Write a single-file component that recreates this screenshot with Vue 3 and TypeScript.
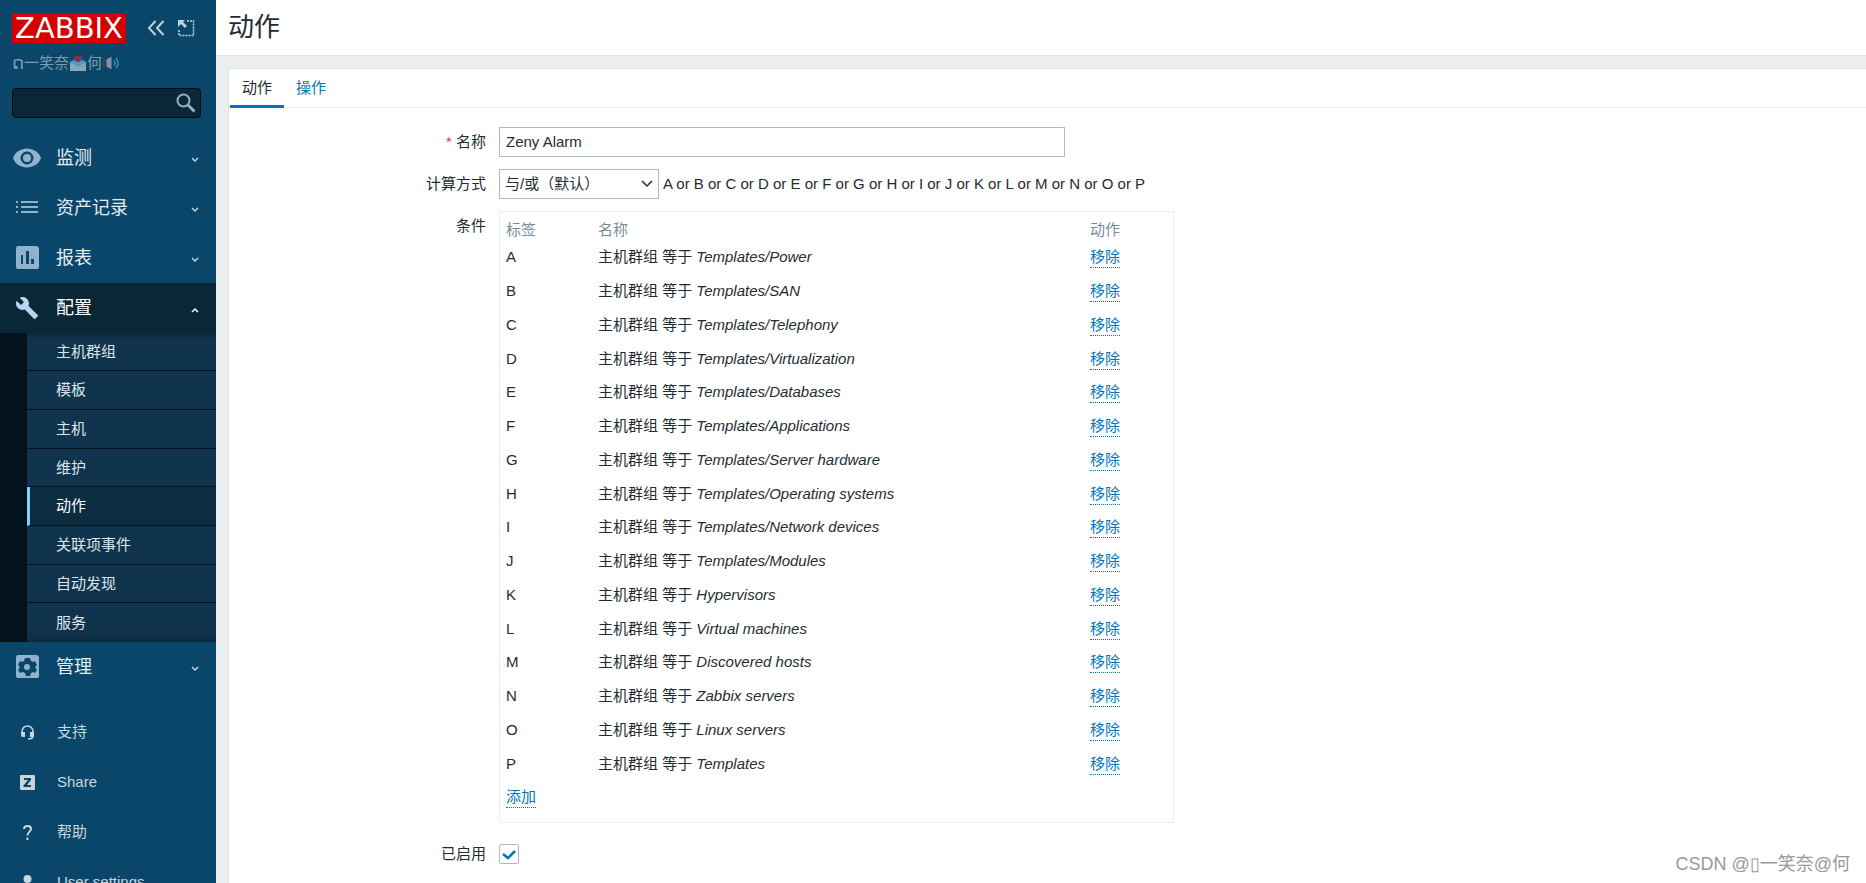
<script setup lang="ts">
import { ref } from 'vue'

interface Condition { label: string; name: string }

const topMenu = [
  { id: 'monitoring', title: '监测' },
  { id: 'inventory', title: '资产记录' },
  { id: 'reports', title: '报表' },
]
const subMenu = ['主机群组', '模板', '主机', '维护', '动作', '关联项事件', '自动发现', '服务']
const activeSub = '动作'
const supportMenu = [
  { id: 'support', title: '支持' },
  { id: 'share', title: 'Share' },
  { id: 'help', title: '帮助' },
  { id: 'user', title: 'User settings' },
]

const groups = [
  'Templates/Power', 'Templates/SAN', 'Templates/Telephony', 'Templates/Virtualization',
  'Templates/Databases', 'Templates/Applications', 'Templates/Server hardware',
  'Templates/Operating systems', 'Templates/Network devices', 'Templates/Modules',
  'Hypervisors', 'Virtual machines', 'Discovered hosts', 'Zabbix servers', 'Linux servers', 'Templates',
]
const conditions: Condition[] = groups.map((name, i) => ({ label: String.fromCharCode(65 + i), name }))
const formula = conditions.map((c) => c.label).join(' or ')

const actionName = ref('Zeny Alarm')
const enabled = ref(true)
const search = ref('')
</script>

<template>
  <div class="layout">
    <aside class="sidebar">
      <div class="brand">
        <a class="logo" href="#" aria-label="ZABBIX">ZABBIX</a>
        <button class="icon-btn" type="button" aria-label="collapse">
          <svg width="18" height="18" viewBox="0 0 18 18" fill="none" stroke="currentColor" stroke-width="2"><path d="M8.500 2 2 9l6.500 7M16.500 2 10 9l6.500 7" /></svg>
        </button>
        <button class="icon-btn" type="button" aria-label="hide">
          <svg width="18" height="18" viewBox="0 0 18 18" fill="currentColor"><path d="M1 1h7L6 3l4 4-2 2-4-4-3 3z" /><path d="M10 2h6.500v14.500H2V10" fill="none" stroke="currentColor" stroke-width="1.500" stroke-dasharray="2 1" /></svg>
        </button>
      </div>
      <div class="server">
        <span class="sym">ດ</span>
        <span>一笑奈</span>
        <svg width="18" height="18" viewBox="0 0 18 18"><path d="M1 7.500 9 3l8 4.500V17H1z" fill="#2f82b0" /><path d="M3 7h12v4l-6 3-6-3z" fill="#4c9bc5" /><path d="M9 8.500C6 6.500 5 5.300 5 3.700 5 1.300 8 .8 9 2.800c1-2 4-1.500 4 .9 0 1.600-1 2.800-4 4.800z" fill="#8c2b49" /><path d="m1 8 8 5 8-5v9H1z" fill="#8da5b6" /></svg>
        <span>何</span>
        <svg width="18" height="18" viewBox="0 0 18 18"><path d="M1 5h4v8H1z" fill="#2c4a5c" /><path d="M4 5 10 2v14l-6-3z" fill="#7c96a5" stroke="#183c52" /><path d="M12 6.500q2 2.500 0 5M14 4q4 5 0 10" fill="none" stroke="#1b9ac4" stroke-width="1.500" /></svg>
      </div>
      <form class="search" @submit.prevent>
        <input v-model="search" type="text" aria-label="search" />
        <button type="submit" aria-label="search">
          <svg width="20" height="20" viewBox="0 0 20 20" fill="none" stroke="currentColor" stroke-width="2"><circle cx="7.500" cy="7.500" r="6" /><path d="m12 12 6.500 6.500" stroke-width="3" /></svg>
        </button>
      </form>

      <nav class="menu">
        <a v-for="m in topMenu" :key="m.id" href="#" class="item">
          <svg v-if="m.id === 'monitoring'" class="ico" viewBox="0 0 30 30"><path fill-rule="evenodd" d="M1 15C3 9 9 5.500 15 5.500S27 9 29 15C27 21 21 24.500 15 24.500S3 21 1 15zM15 8.500a6.500 6.500 0 1 0 0 13 6.500 6.500 0 0 0 0-13z" /><circle cx="15" cy="15" r="4" /></svg>
          <svg v-else-if="m.id === 'inventory'" class="ico" viewBox="0 0 30 30"><path d="M4 8h2v2H4zM9 8h17v2H9zM4 13h2v2H4zM9 13h17v2H9zM4 18h2v2H4zM9 18h17v2H9z" /></svg>
          <svg v-else class="ico" viewBox="0 0 30 30"><path fill-rule="evenodd" d="M6 3h18q3 0 3 3v18q0 2-3 2H6q-2 0-2-2V6q0-3 2-3zM9 12v9h2v-9zM14 8v13h3V8zM19 16v5h3v-5z" /></svg>
          <span>{{ m.title }}</span>
          <svg class="chev" viewBox="0 0 8 6"><path d="m1 1 3 3 3-3" /></svg>
        </a>
        <div class="group">
          <a href="#" class="item open">
            <svg class="ico" viewBox="0 0 30 30"><path transform="translate(3 3)" d="M22.700 19l-9.100-9.100c.9-2.300.4-5-1.500-6.900-2-2-5-2.400-7.400-1.300L9 6 6 9 1.600 4.700C.4 7.100.9 10.100 2.900 12.100c1.900 1.900 4.600 2.400 6.900 1.500l9.100 9.100c.4.400 1 .4 1.400 0l2.300-2.300c.5-.4.5-1.100.1-1.400z" /></svg>
            <span>配置</span>
            <svg class="chev" viewBox="0 0 8 6"><path d="m1 5 3-3 3 3" /></svg>
          </a>
          <div class="submenu">
            <a v-for="s in subMenu" :key="s" href="#" :class="{ active: s === activeSub }">{{ s }}</a>
          </div>
        </div>
        <a href="#" class="item">
          <svg class="ico" viewBox="0 0 30 30"><path fill-rule="evenodd" d="M6 3h18q3 0 3 3v18q0 2-3 2H6q-2 0-2-2V6q0-3 2-3zM13 6l-1 3-2 1-2-1-2 4 2 2-2 3 2 3 3-1 2 1 1 3h4l1-3 2-1 2 1 2-3-2-3 2-2-2-4-2 1-2-1-1-3z" /><circle cx="15" cy="15" r="3" /></svg>
          <span>管理</span>
          <svg class="chev" viewBox="0 0 8 6"><path d="m1 1 3 3 3-3" /></svg>
        </a>
      </nav>
      <nav class="support">
        <a v-for="m in supportMenu" :key="m.id" href="#" class="item">
          <svg v-if="m.id === 'support'" class="small" viewBox="0 0 15 15"><path d="M2 8V6.500a5.500 5.500 0 0 1 11 0V11q0 3-5 3" fill="none" stroke="currentColor" stroke-width="1.500" /><path d="M1 7h4v5H3q-2 0-2-2zM10 7h4v3q0 2-2 2h-2z" /></svg>
          <svg v-else-if="m.id === 'share'" class="small" viewBox="0 0 15 15"><path fill-rule="evenodd" d="M1 0h13q1 0 1 1v13q0 1-1 1H1q-1 0-1-1V1q0-1 1-1zM4 3v2h4l-4.500 5.500V12H11v-2H7l4-5V3z" /></svg>
          <svg v-else-if="m.id === 'help'" class="small" viewBox="0 0 15 15"><path d="M4 4Q4 1 7.500 1t3.500 3c0 2.500-3.500 3-3.500 6.500" fill="none" stroke="currentColor" stroke-width="2" /><path d="M6.500 12.500h2v2.500h-2z" /></svg>
          <svg v-else class="small" viewBox="0 0 15 15"><circle cx="7.500" cy="4" r="4" /><path d="M0 15q0-5 7.500-5T15 15z" /></svg>
          <span>{{ m.title }}</span>
        </a>
      </nav>
    </aside>

    <div class="page">
      <header><h1>动作</h1></header>
      <main class="panel">
        <nav class="tabs">
          <a href="#" class="selected">动作</a>
          <a href="#">操作</a>
        </nav>
        <form class="form" @submit.prevent>
          <label for="name"><span class="req">*</span> 名称</label>
          <input id="name" v-model="actionName" class="name" type="text" />

          <label for="calc">计算方式</label>
          <div class="calc">
            <div class="select">
              <select id="calc"><option>与/或（默认）</option></select>
              <svg width="12" height="8" viewBox="0 0 12 8"><path d="m1 1 5 5 5-5" /></svg>
            </div>
            <span>{{ formula }}</span>
          </div>

          <span class="label">条件</span>
          <div class="box">
            <table>
              <thead><tr><th class="c1">标签</th><th class="c2">名称</th><th>动作</th></tr></thead>
              <tbody>
                <tr v-for="c in conditions" :key="c.label">
                  <td>{{ c.label }}</td>
                  <td>主机群组 等于 <em>{{ c.name }}</em></td>
                  <td><button type="button" class="link">移除</button></td>
                </tr>
                <tr><td colspan="3"><button type="button" class="link">添加</button></td></tr>
              </tbody>
            </table>
          </div>

          <label for="enabled">已启用</label>
          <span class="check">
            <input id="enabled" v-model="enabled" type="checkbox" />
            <svg v-if="enabled" width="20" height="20" viewBox="0 0 20 20"><path d="m4 10 5 4 7-7" /></svg>
          </span>
        </form>
      </main>
      <div class="watermark">CSDN @▯一笑奈@何</div>
    </div>
  </div>
</template>

<style>
body { background: #ebeef0; overflow: hidden; }
</style>

<style scoped>
.layout {
  display: flex;
  height: 100vh;
  overflow: hidden;
  font: 15px/20px "Liberation Sans", Arial, "Noto Sans CJK SC", sans-serif;
  color: #1f2c33;
}
.layout *, .layout { box-sizing: border-box; }
a { text-decoration: none; color: inherit; }
button, input, select { font: inherit; color: inherit; }
button { padding: 0; border: 0; background: none; cursor: pointer; }

.sidebar {
  flex: 0 0 216px;
  background: #0a466a;
  color: #dce6ec;
  overflow: hidden;
}
.brand { display: flex; align-items: center; padding: 13px 8px 0 12px; }
.logo {
  width: 114px;
  height: 30px;
  margin-right: 21px;
  background: #d40000;
  color: #fff;
  font: 29px/30px "DejaVu Sans", "Noto Sans", sans-serif;
  text-align: center;
}
.icon-btn { height: 30px; width: 30px; color: #c2d1da; text-align: left; }
.icon-btn svg { display: block; }
.server {
  display: flex;
  align-items: center;
  height: 20px;
  margin: 10px 12px 15px;
  color: #7c9cb0;
}
.sym { font-family: "DejaVu Sans", sans-serif; font-size: 18px; }
.search {
  display: flex;
  height: 30px;
  margin: 0 15px 15px 12px;
  background: #0a2737;
  border: 1px solid #020d14;
  border-radius: 4px;
}
.search input { flex: 1; min-width: 0; background: none; border: 0; outline: 0; padding: 0 5px; }
.search button { width: 28px; color: #8fb0c6; }
.search svg { display: block; margin: auto; }

.item { display: flex; align-items: center; height: 50px; padding: 0 17px 0 12px; }
.menu .item { font-size: 18px; color: #e4edf2; }
.menu .item span { flex: 1; }
.ico { width: 30px; height: 30px; margin-right: 14px; fill: #8fb3cc; }
.chev { width: 8px; height: 6px; margin-top: 3px; fill: none; stroke: #c2d1da; stroke-width: 1.500; }
.menu .open { background: #0a2737; color: #fff; }
.open .ico { fill: #b5d7ee; }
.open .chev { stroke: #fff; }
.submenu { padding-left: 27px; background: #03131c; }
.submenu a {
  display: flex;
  align-items: center;
  height: 39px;
  padding-left: 29px;
  background: #10344d;
  border-bottom: 1px solid #03131c;
}
.submenu a:nth-child(3n + 1) { height: 38px; }
.submenu a:first-child { background: linear-gradient(#0c2a3e, #10344d 9px); }
.submenu a:last-child { background: linear-gradient(#10344d 28px, #0c2a3e); border: 0; }
.submenu .active { background: #0c2d40; border-left: 3px solid #80cfff; padding-left: 26px; color: #fff; }
.support { padding-top: 15px; }
.support .item { color: #c8d6de; }
.small { width: 15px; height: 15px; margin: 0 22px 0 8px; fill: currentColor; }

.page { flex: 1; display: flex; flex-direction: column; min-width: 0; }
header { background: #fff; border-bottom: 1px solid #dfe4e7; padding: 12px; }
h1 { margin: 0; font-size: 26px; line-height: 31px; font-weight: 400; }
.panel {
  flex: 1;
  margin: 12px 0 0 12px;
  background: #fff;
  border: 1px solid #dfe4e7;
  border-width: 1px 0 0 1px;
}
.tabs { display: flex; margin-left: 1px; border-bottom: 1px solid #ebeef0; }
.tabs a { margin-bottom: -1px; padding: 9px 12px 7px; border-bottom: 3px solid transparent; color: #0275b8; }
.tabs .selected { color: #1f2c33; border-color: #0275b8; }

.form {
  display: grid;
  grid-template-columns: 257px 1fr;
  justify-items: start;
  column-gap: 13px;
  row-gap: 12px;
  padding-top: 19px;
}
.form > label, .form > .label { justify-self: end; padding-top: 5px; }
.req { color: #e33734; }
.name { width: 566px; max-width: 100%; height: 30px; padding: 0 6px 2px; border: 1px solid #acbbc2; outline: 0; }
.calc { display: flex; align-items: center; gap: 4px; }
.select { position: relative; }
select { appearance: none; display: block; width: 160px; height: 30px; padding: 0 5px; border: 1px solid #acbbc2; border-radius: 0; background: #fff; }
.select svg { position: absolute; right: 6px; top: 11px; pointer-events: none; }
.select path { fill: none; stroke: #1f2c33; stroke-width: 1.500; }
.box { width: 675px; max-width: 100%; padding: 6px; border: 1px solid #ebeef0; }
table { width: 100%; border-collapse: collapse; table-layout: fixed; }
th { height: 24px; padding: 0; font-weight: 400; text-align: left; color: #768d99; }
.c1 { width: 92px; }
.c2 { width: 492px; }
td { height: 34px; padding: 5px 0 9px; }
tr:nth-child(4n) td { height: 33px; padding-bottom: 8px; }
.link { display: block; line-height: 20px; color: #0275b8; border-bottom: 1px dotted #0275b8; }
td .link { margin-bottom: -1px; }
.check { position: relative; width: 20px; height: 20px; margin-top: 9px; }
.check input { appearance: none; display: block; width: 20px; height: 20px; margin: 0; border: 1px solid #acbbc2; border-radius: 2px; }
.check svg { position: absolute; inset: 0; pointer-events: none; }
.check path { fill: none; stroke: #0275b8; stroke-width: 2.500; }
.form > label[for="enabled"] { padding-top: 9px; }

.watermark {
  position: absolute;
  right: 16px;
  bottom: 5px;
  font-size: 18px;
  line-height: 28px;
  color: #999;
}
</style>
